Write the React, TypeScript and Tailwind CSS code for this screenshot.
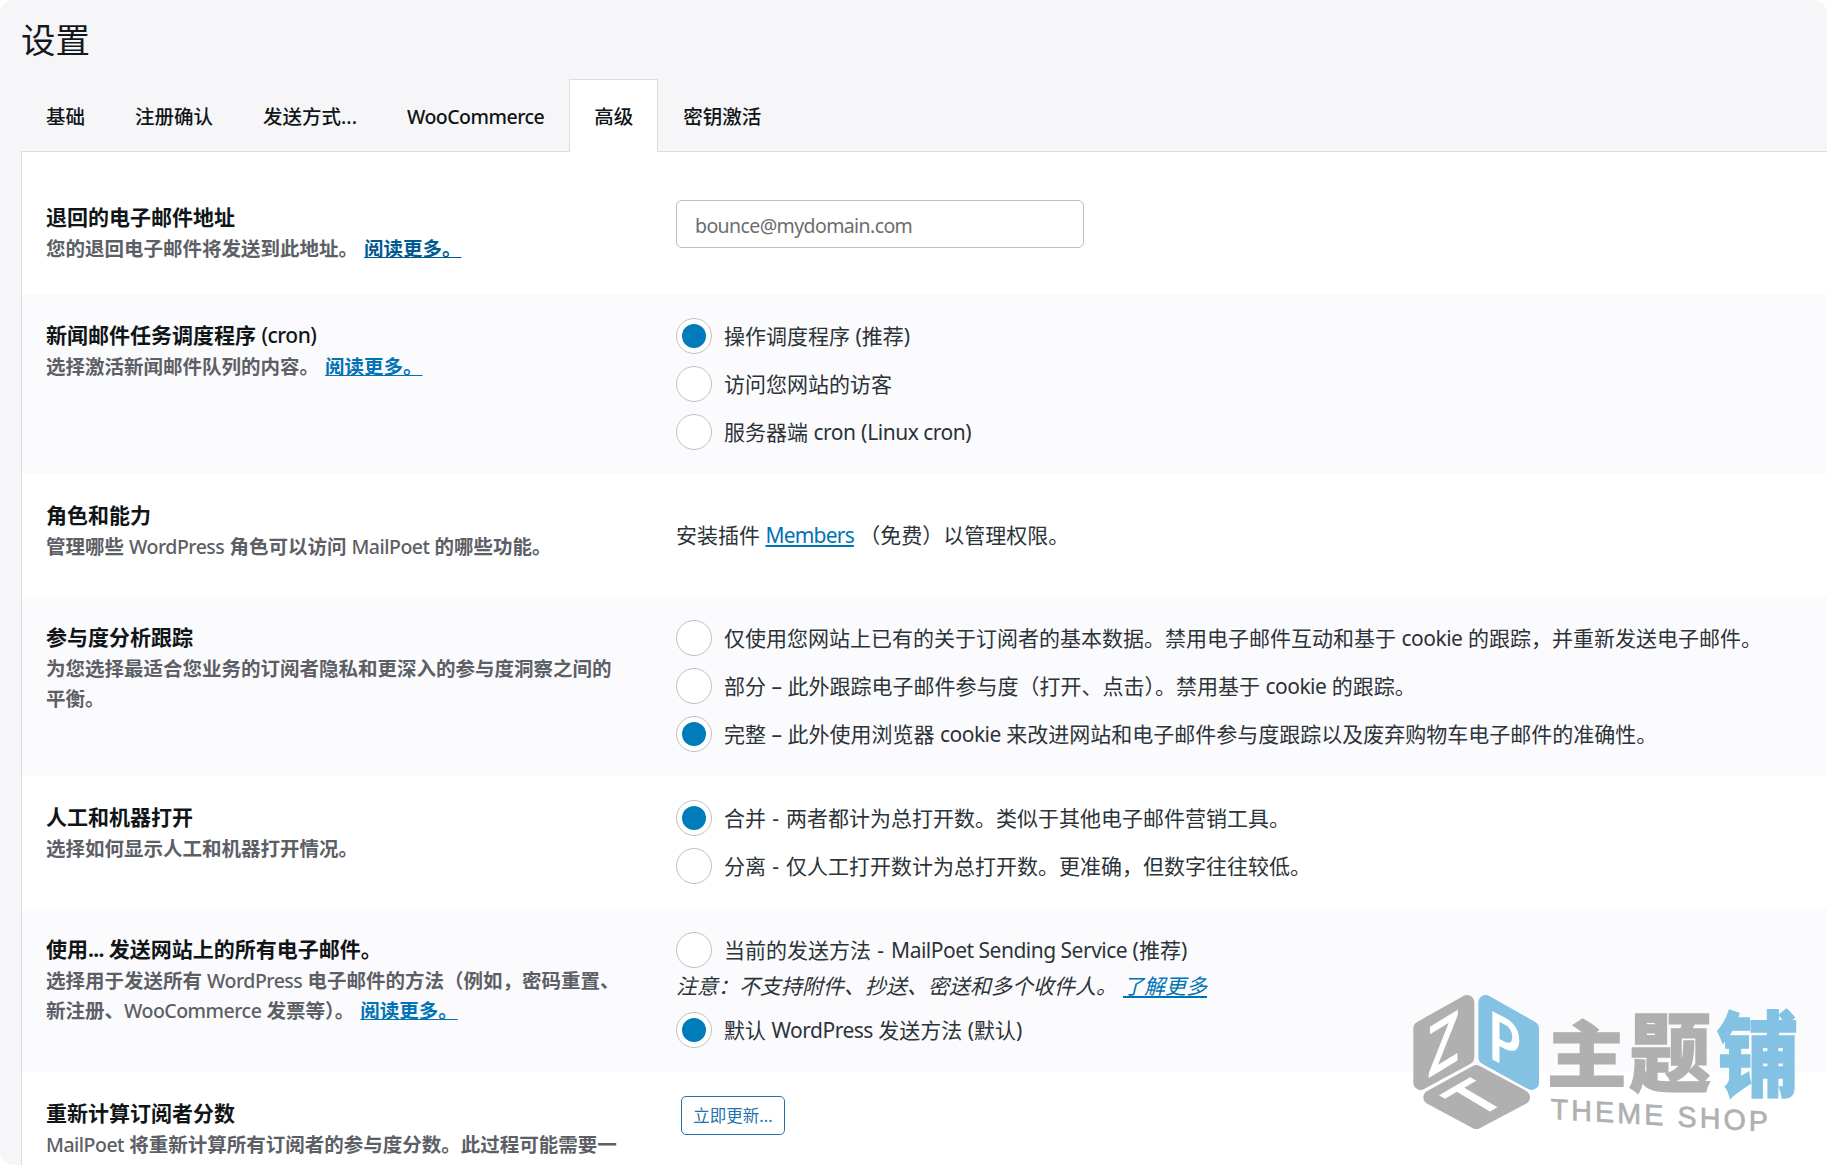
import { useState, type ReactNode } from 'react';

const tabs = ['基础', '注册确认', '发送方式...', 'WooCommerce', '高级', '密钥激活'];

// Tightens Latin words and loosens the spaced hyphen next to Chinese text
function Mixed({ text }: { text: string }) {
  return text.split(/([A-Za-z]+(?: [A-Za-z]+)*| - )/).map((part, i) => {
    if (part === ' - ') {
      return <span key={i} className="tracking-[0.8px]">{part}</span>;
    }
    return i % 2 ? <span key={i} className="tracking-[-0.5px]">{part}</span> : part;
  });
}

function Latin({ children }: { children: string }) {
  return <span className="font-medium tracking-[-0.5px]">{children}</span>;
}

function Radio({ checked, onSelect, text }: { checked: boolean; onSelect: () => void; text: string }) {
  return (
    <label className="flex h-9 items-center gap-3">
      <input type="radio" className="sr-only" checked={checked} onChange={onSelect} />
      <span className="flex size-9 shrink-0 items-center justify-center rounded-full border border-[#bfc1c6] bg-white">
        {checked && <span className="size-6 rounded-full bg-[#007cba]" />}
      </span>
      <span className="pt-[2px] whitespace-nowrap">
        <Mixed text={text} />
      </span>
    </label>
  );
}

function RadioGroup({ options, initial }: { options: string[]; initial: number }) {
  const [selected, setSelected] = useState(initial);

  return (
    <div className="flex flex-col gap-3">
      {options.map((option, i) => (
        <Radio key={option} checked={selected === i} onSelect={() => setSelected(i)} text={option} />
      ))}
    </div>
  );
}

function ReadMore({ dark = false }: { dark?: boolean }) {
  return (
    <a href="#" className={dark ? 'ml-[6px] text-[#005a92] underline' : 'ml-[6px] text-[#0073b5] underline'}>
      阅读更多。
    </a>
  );
}

interface RowProps {
  title: ReactNode;
  description: ReactNode;
  className: string;
  children: ReactNode;
}

function Row({ title, description, className, children }: RowProps) {
  return (
    <section className={`flex pl-6 ${className}`}>
      <div className="w-[630px] shrink-0 pr-[34px]">
        <h2 className="text-[21px] leading-[34px] font-bold text-[#101517]">{title}</h2>
        <p className="text-[19.5px] leading-[30px] font-semibold text-[#5c6066]">{description}</p>
      </div>
      <div className="text-[21px] text-[#2c3338]">{children}</div>
    </section>
  );
}

function Watermark() {
  return (
    <svg
      className="pointer-events-none absolute top-[970px] left-[1390px] h-[195px] w-[437px]"
      viewBox="0 0 1311 585"
      fontFamily="'Noto Sans CJK SC', sans-serif"
    >
      <g strokeWidth="44" strokeLinejoin="round">
        <path d="M231 97 L231 262 L92 338 L92 175 Z" fill="#b0b0b0" stroke="#b0b0b0" />
        <path d="M287 97 L425 175 L425 338 L287 262 Z" fill="#84c2e4" stroke="#84c2e4" />
        <path d="M259 307 L398 382 L259 455 L122 382 Z" fill="#b0b0b0" stroke="#b0b0b0" />
      </g>
      <g fill="#ffffff" fontFamily="Lato, sans-serif" fontWeight="700" fontSize="200">
        <text transform="matrix(0.78 -0.48 0 1.05 113 326)">Z</text>
        <text transform="matrix(0.78 0.4 0 1 295 262)">P</text>
        <text transform="matrix(0.82 -0.47 0.81 0.48 262 446)">T</text>
      </g>
      <g fontWeight="900" strokeWidth="4">
        <text transform="matrix(1 0 0 0.9 470 334)" fontSize="240" fill="#b0b0b0" stroke="#b0b0b0">主</text>
        <text transform="matrix(1 0 0 1.06 717 345)" fontSize="246" fill="#b0b0b0" stroke="#b0b0b0">题</text>
        <text transform="matrix(1 0 0 1.13 980 357)" fontSize="246" fill="#84c2e4" stroke="#84c2e4">铺</text>
      </g>
      <text
        transform="matrix(1 0.06 0 1 482 446)"
        fill="#b0b0b0"
        fontFamily="'Liberation Sans', sans-serif"
        fontSize="86"
        textLength="652"
        stroke="#b0b0b0"
        strokeWidth="2"
      >
        THEME SHOP
      </text>
    </svg>
  );
}

export default function App() {
  const [sendMethod, setSendMethod] = useState('default');

  return (
    <div className="h-[1165px] w-full overflow-hidden bg-white">
      <main className="relative flex h-full flex-col overflow-hidden rounded-[14px] bg-[#f6f6f8] pl-[21px] font-['Noto_Sans','Noto_Sans_CJK_SC',sans-serif]">
        <h1 className="h-[79px] pt-[15px] text-[34.5px] leading-[50px] text-[#14181b]">设置</h1>

        <nav className="relative z-10 -mb-px flex h-[73px] shrink-0 text-[19.5px] font-medium text-[#101517]">
          {tabs.map((tab) => (
            <a
              key={tab}
              href="#"
              className={
                tab === '高级'
                  ? 'flex items-center border border-b-0 border-[#dcdcde] bg-white px-6 pt-[2px]'
                  : 'flex items-center border border-transparent px-6 pt-[2px]'
              }
            >
              <span><Mixed text={tab} /></span>
            </a>
          ))}
        </nav>

        <div className="flex-1 overflow-hidden border-t border-l border-[#dcdcde] bg-white">
          <Row
            className="h-[142px] pt-12"
            title="退回的电子邮件地址"
            description={<>您的退回电子邮件将发送到此地址。<ReadMore dark /></>}
          >
            <input
              className="h-12 w-[408px] rounded-md border border-[#bfc1c6] bg-white px-[18px] pt-[2px] text-[19.5px] tracking-[-0.6px] placeholder:text-[#6b6d70]"
              placeholder="bounce@mydomain.com"
            />
          </Row>

          <Row
            className="h-[180px] bg-[#fbfbfd] pt-6"
            title={<>新闻邮件任务调度程序 <Latin>(cron)</Latin></>}
            description={<>选择激活新闻邮件队列的内容。<ReadMore /></>}
          >
            <RadioGroup initial={0} options={['操作调度程序 (推荐)', '访问您网站的访客', '服务器端 cron (Linux cron)']} />
          </Row>

          <Row
            className="h-[122px] pt-6"
            title="角色和能力"
            description={<>管理哪些 <Latin>WordPress</Latin> 角色可以访问 <Latin>MailPoet</Latin> 的哪些功能。</>}
          >
            <p className="pt-[22px]">
              安装插件 <a href="#" className="tracking-[-0.8px] text-[#0073b5] underline">Members</a> （免费）以管理权限。
            </p>
          </Row>

          <Row
            className="h-[180px] bg-[#fbfbfd] pt-6"
            title="参与度分析跟踪"
            description={<>为您选择最适合您业务的订阅者隐私和更深入的参与度洞察之间的<br />平衡。</>}
          >
            <RadioGroup
              initial={2}
              options={[
                '仅使用您网站上已有的关于订阅者的基本数据。禁用电子邮件互动和基于 cookie 的跟踪，并重新发送电子邮件。',
                '部分 – 此外跟踪电子邮件参与度（打开、点击）。禁用基于 cookie 的跟踪。',
                '完整 – 此外使用浏览器 cookie 来改进网站和电子邮件参与度跟踪以及废弃购物车电子邮件的准确性。',
              ]}
            />
          </Row>

          <Row className="h-[132px] pt-6" title="人工和机器打开" description="选择如何显示人工和机器打开情况。">
            <RadioGroup
              initial={0}
              options={[
                '合并 - 两者都计为总打开数。类似于其他电子邮件营销工具。',
                '分离 - 仅人工打开数计为总打开数。更准确，但数字往往较低。',
              ]}
            />
          </Row>

          <Row
            className="h-[164px] bg-[#fbfbfd] pt-6"
            title={<>使用<span className="tracking-[-0.6px]">... </span>发送网站上的所有电子邮件。</>}
            description={
              <>
                选择用于发送所有 <Latin>WordPress</Latin> 电子邮件的方法（例如，密码重置、<br />
                新注册、<Latin>WooCommerce</Latin> 发票等）。<ReadMore />
              </>
            }
          >
            <Radio
              checked={sendMethod === 'current'}
              onSelect={() => setSendMethod('current')}
              text="当前的发送方法 - MailPoet Sending Service (推荐)"
            />
            <p className="h-11 leading-[36px] italic">
              注意：不支持附件、抄送、密送和多个收件人。
              <a href="#" className="ml-[6px] text-[#0073b5] underline">了解更多</a>
            </p>
            <Radio
              checked={sendMethod === 'default'}
              onSelect={() => setSendMethod('default')}
              text="默认 WordPress 发送方法 (默认)"
            />
          </Row>

          <Row
            className="pt-6"
            title="重新计算订阅者分数"
            description={
              <>
                <Latin>MailPoet</Latin> 将重新计算所有订阅者的参与度分数。此过程可能需要一<br />
                些时间才能完成。
              </>
            }
          >
            <button className="ml-[5px] flex h-[39px] w-[104px] items-center justify-center rounded-[5px] border border-[#2271b1] bg-white pt-[2px] text-[16.5px] text-[#2271b1]">
              立即更新...
            </button>
          </Row>
        </div>

        <Watermark />
      </main>
    </div>
  );
}
